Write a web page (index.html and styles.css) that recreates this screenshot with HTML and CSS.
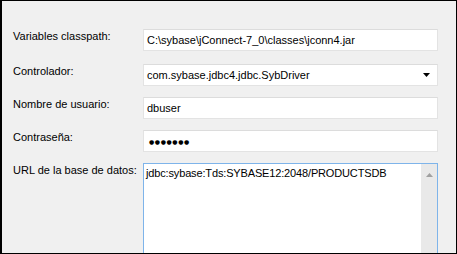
FILE: index.html
```html
<!DOCTYPE html>
<html lang="es">
<head>
    <meta charset="UTF-8">
    <title>Conexión Sybase</title>
    <link rel="stylesheet" href="styles.css">
</head>
<body>
<div class="frame">
    <div class="form">
        <div class="row first">
            <label class="lbl">Variables classpath:</label>
            <div class="field">C:\sybase\jConnect-7_0\classes\jconn4.jar</div>
        </div>
        <div class="row">
            <label class="lbl">Controlador:</label>
            <div class="field combo">
                <span>com.sybase.jdbc4.jdbc.SybDriver</span>
                <svg class="arrow" width="7" height="4" viewBox="0 0 7 4"><path d="M0 0H7L3.5 4Z" fill="#000"/></svg>
            </div>
        </div>
        <div class="row">
            <label class="lbl">Nombre de usuario:</label>
            <div class="field">dbuser</div>
        </div>
        <div class="row">
            <label class="lbl">Contraseña:</label>
            <div class="field"><span class="dots">●●●●●●●</span></div>
        </div>
        <div class="row">
            <label class="lbl">URL de la base de datos:</label>
            <div class="field area">
                <span class="area-text">jdbc:sybase:Tds:SYBASE12:2048/PRODUCTSDB</span>
                <div class="scroll">
                    <svg width="7" height="4" viewBox="0 0 7 4"><path d="M3.5 0L7 4H0Z" fill="#a0a0a0"/></svg>
                </div>
            </div>
        </div>
    </div>
</div>
</body>
</html>
```

FILE: styles.css
```css
*{ margin:0; padding:0; box-sizing:border-box;}
body{ width:457px; height:254px; overflow:hidden; font-family:"Liberation Sans", Arial, sans-serif; font-size:11px; color:#000;}
.frame{ width:457px; height:254px; background:#f0f0f0; border:1px solid #000; border-left-width:2px; overflow:hidden; padding:28px 18px 0 11px;}
.form{ display:flex; flex-direction:column; gap:11px;}
.row{ display:flex; align-items:flex-start;}
.row.first{ margin-bottom:2px;}
.lbl{ width:130px; flex:none; line-height:13px; padding-top:1px;}
.field{ flex:1; height:22px; background:#fff; border:1px solid #e3e3e3; border-top-color:#dcdcdc; padding:4px 3px 0 3px; line-height:13px; white-space:nowrap; overflow:hidden;}
.combo{ display:flex; justify-content:space-between;}
.combo .arrow{ margin:4px 4px 0 0; flex:none;}
.dots{ font-family:"DejaVu Sans", sans-serif; font-size:6px; letter-spacing:0.6px; position:relative; top:-1px; padding-left:2px;}
.area{ height:100px; border-color:#7eb4ea; display:flex; justify-content:space-between; padding:2px 0 0 2px;}
.area-text{ padding-top:1px; letter-spacing:-0.15px;}
.scroll{ width:16px; height:100%; background:#e9e9e9; display:flex; justify-content:center; padding-top:9px; margin-top:-2px;}
.scroll svg{ flex:none;}
```
